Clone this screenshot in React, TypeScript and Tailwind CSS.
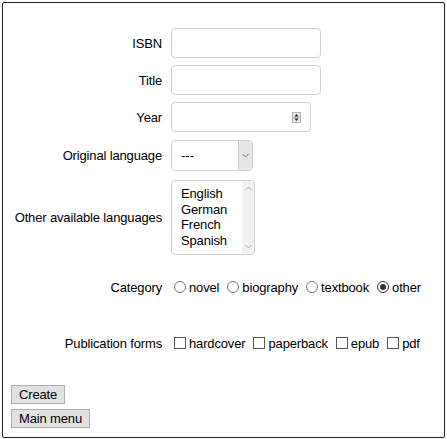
import React from "react";

function Radio({ checked }: { checked?: boolean }) {
  return (
    <span
      className={
        "inline-flex items-center justify-center w-[12px] h-[12px] rounded-full border bg-white " +
        (checked ? "border-[#333]" : "border-[#777]")
      }
    >
      {checked && <span className="block w-[6px] h-[6px] rounded-full bg-[#333]" />}
    </span>
  );
}

function Check() {
  return <span className="inline-block w-[12px] h-[12px] border border-[#555] bg-white" />;
}

function Row({ label, children, className }: { label: string; children: React.ReactNode; className?: string }) {
  return (
    <div className={"flex items-center " + (className ?? "")}>
      <div className="w-[159px] text-right shrink-0">{label}</div>
      <div className="ml-[9px]">{children}</div>
    </div>
  );
}

export default function App() {
  return (
    <div
      className="m-[2px] w-[443px] h-[436px] border border-[#222] rounded-[2px] bg-white text-black text-[13px] leading-[15px] tracking-[-0.15px] flex flex-col"
      style={{ fontFamily: '"Liberation Sans", Arial, sans-serif' }}
    >
      <Row label="ISBN" className="mt-[25px]">
        <div className="w-[150px] h-[30px] border border-[#d2d2d2] rounded-[4px] bg-white" />
      </Row>
      <Row label="Title" className="mt-[7px]">
        <div className="w-[150px] h-[30px] border border-[#d2d2d2] rounded-[4px] bg-white" />
      </Row>
      <Row label="Year" className="mt-[7px]">
        <div className="w-[140px] h-[30px] border border-[#d2d2d2] rounded-[4px] bg-white flex items-center justify-end pr-[9px]">
          <svg width="9" height="11" viewBox="0 0 9 11">
            <rect x="0.5" y="0.5" width="8" height="10" fill="#e8e8e8" stroke="#b5b5b5" />
            <line x1="1" y1="5.5" x2="8" y2="5.5" stroke="#b5b5b5" />
            <path d="M2.5 4.5 L4.5 2 L6.5 4.5 Z" fill="#222" />
            <path d="M2.5 6.5 L4.5 9 L6.5 6.5 Z" fill="#222" />
          </svg>
        </div>
      </Row>
      <Row label="Original language" className="mt-[8px]">
        <div className="w-[82px] h-[31px] border border-[#d2d2d2] rounded-[4px] bg-white flex items-stretch overflow-hidden">
          <div className="flex-1 flex items-center pl-[9px] tracking-normal">---</div>
          <div className="w-[14px] bg-[#e6e6e6] border-l border-[#cfcfcf] flex items-center justify-center">
            <svg width="7" height="5" viewBox="0 0 7 5">
              <path d="M0.5 1 L3.5 4 L6.5 1" fill="none" stroke="#777" strokeWidth="1" />
            </svg>
          </div>
        </div>
      </Row>
      <Row label="Other available languages" className="mt-[9px]">
        <div className="w-[84px] h-[75px] border border-[#d2d2d2] rounded-[4px] bg-white flex items-stretch overflow-hidden">
          <div className="flex-1 pl-[9px] pt-[5px] leading-[15.5px]">
            <div>English</div>
            <div>German</div>
            <div>French</div>
            <div>Spanish</div>
          </div>
          <div className="w-[12px] bg-[#f1f1f1] flex flex-col items-center justify-between py-[5px]">
            <svg width="7" height="5" viewBox="0 0 7 5">
              <path d="M0.5 4 L3.5 1 L6.5 4" fill="none" stroke="#aaa" strokeWidth="1" />
            </svg>
            <svg width="7" height="5" viewBox="0 0 7 5">
              <path d="M0.5 1 L3.5 4 L6.5 1" fill="none" stroke="#aaa" strokeWidth="1" />
            </svg>
          </div>
        </div>
      </Row>
      <Row label="Category" className="mt-[23px] h-[18px]">
        <div className="flex items-center pl-[3px] gap-[8px]">
          <label className="flex items-center gap-[3px]"><Radio /><span>novel</span></label>
          <label className="flex items-center gap-[3px]"><Radio /><span>biography</span></label>
          <label className="flex items-center gap-[3px]"><Radio /><span>textbook</span></label>
          <label className="flex items-center gap-[3px]"><Radio checked /><span>other</span></label>
        </div>
      </Row>
      <Row label="Publication forms" className="mt-[38px] h-[18px]">
        <div className="flex items-center pl-[3px] gap-[8px]">
          <label className="flex items-center gap-[3px]"><Check /><span>hardcover</span></label>
          <label className="flex items-center gap-[3px]"><Check /><span>paperback</span></label>
          <label className="flex items-center gap-[3px]"><Check /><span>epub</span></label>
          <label className="flex items-center gap-[3px]"><Check /><span>pdf</span></label>
        </div>
      </Row>
      <div className="mt-[33px] pl-[8px] flex flex-col items-start gap-[5px]">
        <button className="h-[19px] px-[7px] bg-[#e1e1e1] border border-[#adadad] leading-[15px]">Create</button>
        <button className="h-[19px] px-[7px] bg-[#e1e1e1] border border-[#adadad] leading-[15px]">Main menu</button>
      </div>
    </div>
  );
}
